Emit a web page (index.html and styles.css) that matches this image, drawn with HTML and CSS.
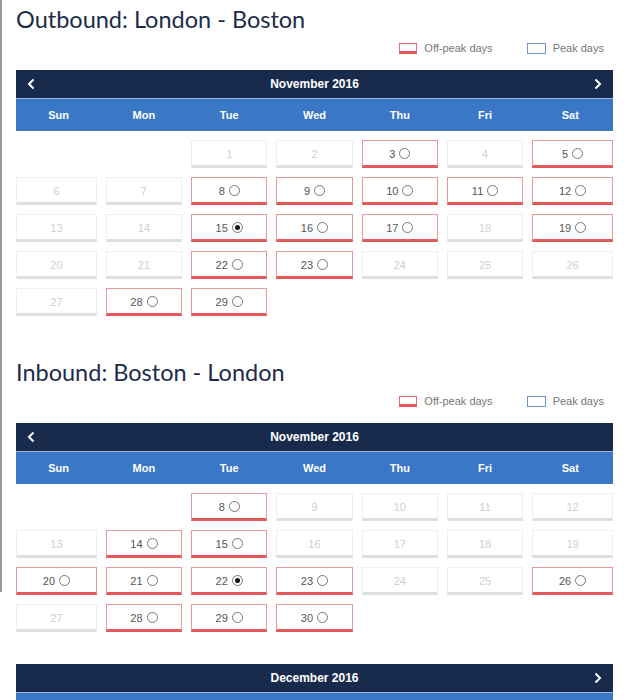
FILE: index.html
```html
<!DOCTYPE html>
<html lang="en">
  <head>
    <meta charset="UTF-8" />
    <meta name="viewport" content="width=device-width, initial-scale=1.0" />
    <title>Select dates</title>
    <link rel="stylesheet" href="styles.css">
  </head>
  <body>
    <div class="page">
      <!-- outbound -->
      <section class="leg">
        <h1 class="leg-title">Outbound: London - Boston</h1>
        <div class="legend">
          <span class="legend-item"><i class="swatch off"></i>Off-peak days</span>
          <span class="legend-item"><i class="swatch peak"></i>Peak days</span>
        </div>
        <div class="month">
          <div class="month-bar">
            <span class="nav prev"><svg width="8" height="12" viewBox="0 0 8 12"><path d="M6.5 1.5 2 6l4.5 4.5" /></svg></span>
            <span class="month-name">November 2016</span>
            <span class="nav next"><svg width="8" height="12" viewBox="0 0 8 12"><path d="M1.5 1.5 6 6l-4.5 4.5" /></svg></span>
          </div>
          <div class="weekdays">
            <span>Sun</span><span>Mon</span><span>Tue</span><span>Wed</span><span>Thu</span><span>Fri</span><span>Sat</span>
          </div>
          <div class="week">
            <div class="day empty"></div>
            <div class="day empty"></div>
            <div class="day na">1</div>
            <div class="day na">2</div>
            <div class="day off">3<i class="radio"></i></div>
            <div class="day na">4</div>
            <div class="day off">5<i class="radio"></i></div>
          </div>
          <div class="week">
            <div class="day na">6</div>
            <div class="day na">7</div>
            <div class="day off">8<i class="radio"></i></div>
            <div class="day off">9<i class="radio"></i></div>
            <div class="day off">10<i class="radio"></i></div>
            <div class="day off">11<i class="radio"></i></div>
            <div class="day off">12<i class="radio"></i></div>
          </div>
          <div class="week">
            <div class="day na">13</div>
            <div class="day na">14</div>
            <div class="day off">15<i class="radio checked"></i></div>
            <div class="day off">16<i class="radio"></i></div>
            <div class="day off">17<i class="radio"></i></div>
            <div class="day na">18</div>
            <div class="day off">19<i class="radio"></i></div>
          </div>
          <div class="week">
            <div class="day na">20</div>
            <div class="day na">21</div>
            <div class="day off">22<i class="radio"></i></div>
            <div class="day off">23<i class="radio"></i></div>
            <div class="day na">24</div>
            <div class="day na">25</div>
            <div class="day na">26</div>
          </div>
          <div class="week">
            <div class="day na">27</div>
            <div class="day off">28<i class="radio"></i></div>
            <div class="day off">29<i class="radio"></i></div>
            <div class="day empty"></div>
            <div class="day empty"></div>
            <div class="day empty"></div>
            <div class="day empty"></div>
          </div>
        </div>
      </section>

      <!-- inbound -->
      <section class="leg">
        <h1 class="leg-title">Inbound: Boston - London</h1>
        <div class="legend">
          <span class="legend-item"><i class="swatch off"></i>Off-peak days</span>
          <span class="legend-item"><i class="swatch peak"></i>Peak days</span>
        </div>
        <div class="month">
          <div class="month-bar">
            <span class="nav prev"><svg width="8" height="12" viewBox="0 0 8 12"><path d="M6.5 1.5 2 6l4.5 4.5" /></svg></span>
            <span class="month-name">November 2016</span>
            <span class="nav next"></span>
          </div>
          <div class="weekdays">
            <span>Sun</span><span>Mon</span><span>Tue</span><span>Wed</span><span>Thu</span><span>Fri</span><span>Sat</span>
          </div>
          <div class="week">
            <div class="day empty"></div>
            <div class="day empty"></div>
            <div class="day off">8<i class="radio"></i></div>
            <div class="day na">9</div>
            <div class="day na">10</div>
            <div class="day na">11</div>
            <div class="day na">12</div>
          </div>
          <div class="week">
            <div class="day na">13</div>
            <div class="day off">14<i class="radio"></i></div>
            <div class="day off">15<i class="radio"></i></div>
            <div class="day na">16</div>
            <div class="day na">17</div>
            <div class="day na">18</div>
            <div class="day na">19</div>
          </div>
          <div class="week">
            <div class="day off">20<i class="radio"></i></div>
            <div class="day off">21<i class="radio"></i></div>
            <div class="day off">22<i class="radio checked"></i></div>
            <div class="day off">23<i class="radio"></i></div>
            <div class="day na">24</div>
            <div class="day na">25</div>
            <div class="day off">26<i class="radio"></i></div>
          </div>
          <div class="week">
            <div class="day na">27</div>
            <div class="day off">28<i class="radio"></i></div>
            <div class="day off">29<i class="radio"></i></div>
            <div class="day off">30<i class="radio"></i></div>
            <div class="day empty"></div>
            <div class="day empty"></div>
            <div class="day empty"></div>
          </div>
        </div>

        <div class="month next-month">
          <div class="month-bar">
            <span class="nav prev"></span>
            <span class="month-name">December 2016</span>
            <span class="nav next"><svg width="8" height="12" viewBox="0 0 8 12"><path d="M1.5 1.5 6 6l-4.5 4.5" /></svg></span>
          </div>
          <div class="weekdays">
            <span>Sun</span><span>Mon</span><span>Tue</span><span>Wed</span><span>Thu</span><span>Fri</span><span>Sat</span>
          </div>
        </div>
      </section>
    </div>
  </body>
</html>
```

FILE: styles.css
```css
body {
  margin: 0;
  background: #fff;
  font-family: "Liberation Sans", Arial, sans-serif;
  color: #555;
}

/* grey edge of the frame on the left */
body::before {
  content: "";
  position: absolute;
  left: 0;
  top: 0;
  width: 2px;
  height: 592px;
  background: #9a9a9a;
}

.page {
  padding: 0 16px;
}

.leg {
  margin-bottom: 37px;
}

.leg-title {
  margin: 0;
  padding-top: 2px;
  height: 34px;
  font-family: Lato, "Open Sans", sans-serif;
  font-weight: 400;
  font-size: 23.5px;
  line-height: 34px;
  color: #1e2c4c;
}

.legend {
  display: flex;
  justify-content: flex-end;
  gap: 34px;
  padding-right: 9px;
  height: 24px;
  align-items: center;
  font-size: 11px;
  color: #777;
}

.legend-item {
  display: flex;
  align-items: center;
  gap: 7px;
}

.swatch {
  display: block;
  box-sizing: border-box;
  width: 18px;
  height: 11px;
}

.swatch.off {
  border: 1px solid #e07070;
  border-bottom: 3px solid #e05858;
}

.swatch.peak {
  width: 19px;
  border: 1px solid #6f96d2;
}

.month {
  margin-top: 10px;
}

.next-month {
  margin-top: 32px;
}

.month-bar {
  display: flex;
  align-items: center;
  height: 28px;
  background: #182b4d;
  color: #fff;
  font-weight: bold;
  font-size: 12px;
  border-bottom: 1px solid #9fb6d8;
}

.nav {
  width: 30px;
  display: flex;
  justify-content: center;
}

.nav svg path {
  fill: none;
  stroke: #fff;
  stroke-width: 2;
}

.month-name {
  flex: 1;
  text-align: center;
}

.weekdays {
  display: grid;
  grid-template-columns: repeat(7, 1fr);
  height: 32px;
  align-items: center;
  background: #3a77c7;
  color: #fff;
  font-weight: bold;
  font-size: 11px;
  text-align: center;
  margin-bottom: 9px;
}

.week {
  display: grid;
  grid-template-columns: repeat(7, 1fr);
  margin-bottom: 9px;
}

.day {
  box-sizing: border-box;
  height: 28px;
  margin: 0 4.5px;
  display: flex;
  align-items: center;
  justify-content: center;
  gap: 4px;
  font-size: 11px;
  padding-top: 1px;
}

.day:first-child {
  margin-left: 0;
}

.day:last-child {
  margin-right: 0;
}

.day.na {
  border: 1px solid #efefef;
  border-bottom: 3px solid #dedede;
  color: #cfcfcf;
}

.day.off {
  border: 1px solid #e89a9a;
  border-bottom: 3px solid #e05a5a;
  color: #555;
}

.radio {
  box-sizing: border-box;
  width: 11px;
  height: 11px;
  border: 1px solid #777;
  border-radius: 50%;
  display: flex;
  align-items: center;
  justify-content: center;
}

.radio.checked::after {
  content: "";
  width: 5px;
  height: 5px;
  border-radius: 50%;
  background: #111;
}
```
